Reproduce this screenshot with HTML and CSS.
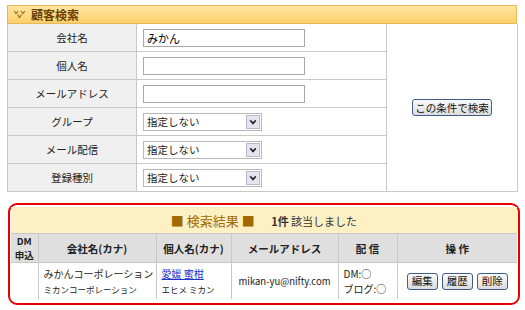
FILE: index.html
```html
<!DOCTYPE html>
<html lang="ja">
<head>
  <meta charset="UTF-8" />
  <title>顧客検索</title>
  <link rel="stylesheet" href="styles.css">
</head>
<body>
  <div class="page">
    <div class="title-bar">
      <span class="title-icon">
        <svg width="13" height="9" viewBox="0 0 13 9">
          <path d="M1 1 L3 3.5 L5 1 M8 1 L10 3.5 L12 1 M4.5 4.5 L6.5 7.5 L8.5 4.5" fill="none" stroke="#a07020" stroke-width="1.2"/>
        </svg>
      </span>
      <span class="title-text">顧客検索</span>
    </div>

    <table class="search">
      <tr>
        <th>会社名</th>
        <td class="field"><input type="text" class="text" value="みかん"></td>
        <td class="action" rowspan="6"><button class="btn">この条件で検索</button></td>
      </tr>
      <tr>
        <th>個人名</th>
        <td class="field"><input type="text" class="text"></td>
      </tr>
      <tr>
        <th>メールアドレス</th>
        <td class="field"><input type="text" class="text"></td>
      </tr>
      <tr>
        <th>グループ</th>
        <td class="field"><span class="select"><span class="select-value">指定しない</span><span class="select-arrow"></span></span></td>
      </tr>
      <tr>
        <th>メール配信</th>
        <td class="field"><span class="select"><span class="select-value">指定しない</span><span class="select-arrow"></span></span></td>
      </tr>
      <tr>
        <th>登録種別</th>
        <td class="field"><span class="select"><span class="select-value">指定しない</span><span class="select-arrow"></span></span></td>
      </tr>
    </table>

    <div class="result-box">
      <table class="result">
        <colgroup>
          <col class="c-dm">
          <col class="c-company">
          <col class="c-person">
          <col class="c-mail">
          <col class="c-send">
          <col class="c-ops">
        </colgroup>
        <tr class="result-head">
          <td colspan="6">
            <span class="result-title">■ 検索結果 ■</span>
            <span class="result-count"><b>1件</b> 該当しました</span>
          </td>
        </tr>
        <tr class="cols">
          <th class="dm-head">DM<br>申込</th>
          <th>会社名(カナ)</th>
          <th>個人名(カナ)</th>
          <th>メールアドレス</th>
          <th>配 信</th>
          <th>操 作</th>
        </tr>
        <tr class="row">
          <td></td>
          <td class="left">みかんコーポレーション<br><span class="kana">ミカンコーポレーション</span></td>
          <td class="left"><a href="#" class="name-link">愛媛 蜜柑</a><br><span class="kana">エヒメ ミカン</span></td>
          <td class="mail">mikan-yu@nifty.com</td>
          <td class="left">DM:○<br>ブログ:○</td>
          <td class="ops"><button class="small-btn">編集</button><button class="small-btn">履歴</button><button class="small-btn">削除</button></td>
        </tr>
      </table>
    </div>
  </div>
</body>
</html>
```

FILE: styles.css
```css
body {
  margin: 0;
  background: #fff;
  font-family: "Noto Sans CJK JP", "DejaVu Sans", sans-serif;
  font-size: 11px;
  color: #222;
}
.page {
  padding: 5px 8px 0 7px;
  width: 510px;
}
.title-bar {
  height: 17px;
  display: flex;
  align-items: center;
  gap: 5px;
  padding-left: 5px;
  background: linear-gradient(to bottom, #fde5a0, #fcd06a);
  border: 1px solid #e8b85a;
}
.title-icon {
  display: flex;
}
.title-text {
  font-weight: bold;
  font-size: 12px;
  color: #6e4200;
}
.search {
  width: 511px;
  border-collapse: collapse;
  border: 1px solid #c8c8c8;
  border-top: none;
}
.search th,
.search td {
  border: 1px solid #c8c8c8;
  height: 27px;
  padding: 0;
}
.search tr:first-child th,
.search tr:first-child td {
  border-top: none;
}
.search th {
  width: 128px;
  background: #f0f0f0;
  font-weight: normal;
  font-size: 10.5px;
  text-align: center;
}
.search .field {
  width: 243px;
  padding-left: 6px;
}
.search .action {
  text-align: center;
  vertical-align: middle;
  background: #fff;
}
.text {
  box-sizing: border-box;
  width: 162px;
  height: 18px;
  border: 1px solid #a8a8a8;
  padding: 0 3px;
  font-family: inherit;
  font-size: 11px;
  display: block;
}
.select {
  box-sizing: border-box;
  width: 119px;
  height: 18px;
  border: 1px solid #b8b8b8;
  display: flex;
  align-items: center;
  justify-content: space-between;
  padding-left: 3px;
  font-size: 10.5px;
}
.select-arrow {
  width: 14px;
  height: 14px;
  margin-right: 1px;
  box-sizing: border-box;
  border: 1px solid #b8b8d0;
  background: #e4e4ec;
  position: relative;
}
.select-arrow::after {
  content: "";
  position: absolute;
  left: 3px;
  top: 2px;
  width: 4px;
  height: 4px;
  border-right: 2px solid #223;
  border-bottom: 2px solid #223;
  transform: rotate(45deg) scale(0.8);
}
.btn,
.small-btn {
  font-family: inherit;
  font-size: 10.5px;
  height: 17px;
  border: 1px solid #3e5e8a;
  border-radius: 3px;
  background: linear-gradient(to bottom, #fafafa, #dcdcdc);
  color: #111;
  line-height: 14px;
}
.btn {
  padding: 0 2px;
}
.small-btn {
  padding: 0 4px;
  margin: 0 2px;
}
.result-box {
  margin-top: 11px;
  margin-left: 1px;
  border: 2px solid #e60000;
  border-radius: 9px;
  padding: 2px 1px 4px 1px;
  width: 506px;
}
.result {
  width: 100%;
  border-collapse: collapse;
  table-layout: fixed;
}
.c-dm { width: 27px; }
.c-company { width: 118px; }
.c-person { width: 75px; }
.c-mail { width: 107px; }
.c-send { width: 59px; }
.result td,
.result th {
  border: 1px solid #c8c8c8;
  padding: 0;
  text-align: center;
  white-space: nowrap;
  overflow: hidden;
}
.result-head td {
  background: #fdf0c3;
  height: 26px;
  border-top: none;
  border-left: none;
  border-right: none;
}
.result-title {
  color: #a06a00;
  font-size: 13px;
  margin-right: 14px;
}
.result-count {
  color: #333;
}
.cols th {
  background: #dfdfdf;
  height: 28px;
  font-weight: bold;
  font-size: 10.5px;
  color: #222;
}
.cols .dm-head {
  line-height: 14px;
  font-size: 9.5px;
}
.result tr td:first-child,
.result tr th:first-child {
  border-left: none;
}
.result tr td:last-child,
.result tr th:last-child {
  border-right: none;
}
.row td {
  height: 36px;
  line-height: 15px;
  border-bottom: none;
  font-size: 10px;
}
.row .left {
  text-align: left;
  padding-left: 5px;
}
.row .mail {
  font-size: 9.5px;
}
.kana {
  font-size: 8.5px;
}
.name-link {
  color: #2233cc;
}
```
